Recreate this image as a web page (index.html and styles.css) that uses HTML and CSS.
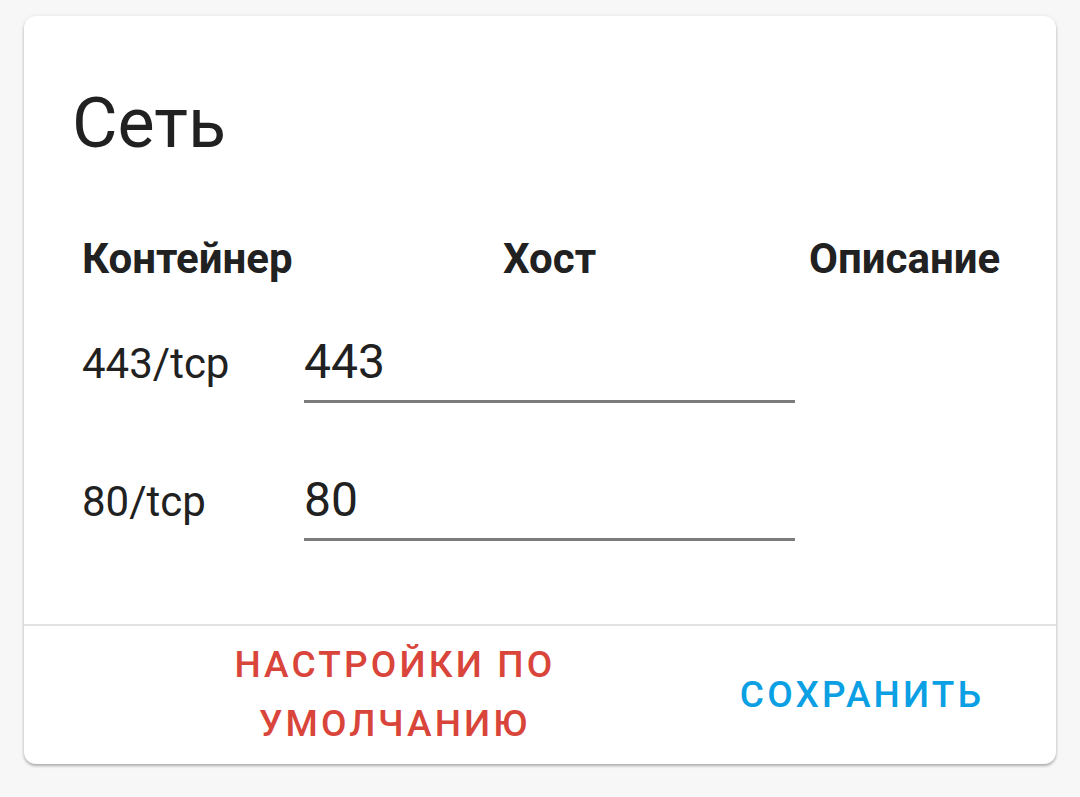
FILE: index.html
```html
<!DOCTYPE html>
<html lang="ru">
<head>
    <meta charset="UTF-8">
    <meta name="viewport" content="width=device-width, initial-scale=1.0">
    <title>Сеть</title>
    <link rel="stylesheet" href="styles.css">
</head>
<body>
    <div class="card">
        <div class="content">
            <h1>Сеть</h1>

            <div class="ports">
                <div class="row head">
                    <div class="cell">Контейнер</div>
                    <div class="cell center">Хост</div>
                    <div class="cell">Описание</div>
                </div>
                <div class="row">
                    <div class="cell port">443/tcp</div>
                    <div class="cell"><input type="text" value="443"></div>
                    <div class="cell"></div>
                </div>
                <div class="row">
                    <div class="cell port">80/tcp</div>
                    <div class="cell"><input type="text" value="80"></div>
                    <div class="cell"></div>
                </div>
            </div>
        </div>

        <div class="actions">
            <button class="btn reset">Настройки по умолчанию</button>
            <button class="btn save">Сохранить</button>
        </div>
    </div>
</body>
</html>
```

FILE: styles.css
```css
* {
    margin: 0;
    padding: 0;
    box-sizing: border-box;
}

body {
    font-family: Roboto, 'Noto Sans', sans-serif;
    background: #f7f7f7;
    color: #212121;
    padding: 16px 24px;
}

.card {
    width: 1032px;
    height: 748px;
    background: white;
    border-radius: 12px;
    box-shadow: 0 2px 3px rgba(0, 0, 0, 0.28), 0 0 5px rgba(0, 0, 0, 0.06);
    overflow: hidden;
}

.content {
    padding: 66px 51px 59px;
}

h1 {
    font-size: 70px;
    font-weight: 400;
    line-height: 82px;
    margin: 0 0 65px -3px;
}

.row {
    display: grid;
    grid-template-columns: 222px 505px 203px;
    align-items: baseline;
    padding: 45px 0 24px;
}

.row.head {
    padding: 0;
}

.cell {
    padding: 0 7px;
}

.head .cell {
    font-size: 42px;
    font-weight: 700;
    line-height: 60px;
    white-space: nowrap;
}

.center {
    text-align: center;
}

.port {
    font-size: 42px;
    line-height: 56px;
}

input {
    width: 100%;
    font-family: inherit;
    font-size: 48px;
    line-height: 56px;
    color: #212121;
    border: none;
    border-bottom: 3px solid #7c7c7c;
    padding: 0 0 10px;
    outline: none;
    background: transparent;
}

.actions {
    border-top: 2px solid #e2e2e2;
    height: 138px;
    display: flex;
    justify-content: flex-end;
    align-items: center;
    padding-right: 47px;
}

.btn {
    background: none;
    border: none;
    font-family: inherit;
    font-size: 37px;
    font-weight: 500;
    line-height: 59px;
    text-transform: uppercase;
    letter-spacing: 0.085em;
    padding: 0 25px;
    cursor: pointer;
    text-align: center;
}

.reset {
    color: #d9453a;
    width: 390px;
    margin-right: 125px;
}

.save {
    color: #0aa0e3;
}
```
